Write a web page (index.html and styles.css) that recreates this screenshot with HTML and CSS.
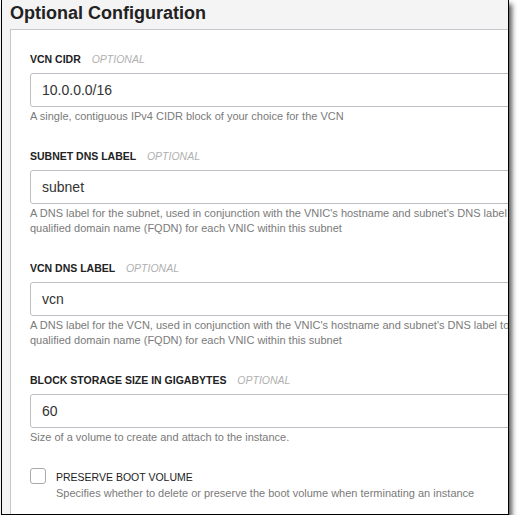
FILE: index.html
```html
<!DOCTYPE html>
<html>
<head>
<meta charset="utf-8">
<link rel="stylesheet" href="styles.css">
</head>
<body>
<div class="frame">
  <h2 class="title">Optional Configuration</h2>
  <div class="panel">
    <div class="field">
      <div class="label">VCN CIDR <span class="opt">OPTIONAL</span></div>
      <div class="input">10.0.0.0/16</div>
      <div class="help">A single, contiguous IPv4 CIDR block of your choice for the VCN</div>
    </div>
    <div class="field">
      <div class="label">SUBNET DNS LABEL <span class="opt">OPTIONAL</span></div>
      <div class="input">subnet</div>
      <div class="help">A DNS label for the subnet, used in conjunction with the VNIC's hostname and subnet's DNS label<br>qualified domain name (FQDN) for each VNIC within this subnet</div>
    </div>
    <div class="field">
      <div class="label">VCN DNS LABEL <span class="opt">OPTIONAL</span></div>
      <div class="input">vcn</div>
      <div class="help">A DNS label for the VCN, used in conjunction with the VNIC's hostname and subnet's DNS label to<br>qualified domain name (FQDN) for each VNIC within this subnet</div>
    </div>
    <div class="field">
      <div class="label">BLOCK STORAGE SIZE IN GIGABYTES <span class="opt">OPTIONAL</span></div>
      <div class="input">60</div>
      <div class="help">Size of a volume to create and attach to the instance.</div>
    </div>
    <div class="check-row">
      <span class="box"></span>
      <div class="check-text">
        <div class="check-label">PRESERVE BOOT VOLUME</div>
        <div class="help">Specifies whether to delete or preserve the boot volume when terminating an instance</div>
      </div>
    </div>
  </div>
</div>
</body>
</html>
```
FILE: styles.css
```css
html, body {
  margin: 0;
  padding: 0;
  background: #ffffff;
}
body {
  font-family: "Liberation Sans", Arial, sans-serif;
}
.frame {
  width: 506px;
  height: 514px;
  margin-left: 1px;
  border: 1px solid #000;
  border-top: none;
  background: #f4f4f4;
  overflow: hidden;
  box-shadow: 3px 4px 5px rgba(0, 0, 0, 0.65);
}
.title {
  margin: 0;
  padding: 2px 0 5px 8px;
  font-size: 18px;
  line-height: 22px;
  font-weight: bold;
  color: #222;
  white-space: nowrap;
}
.panel {
  margin-left: 8px;
  width: 640px;
  height: 600px;
  background: #fff;
  border: 1px solid #c6c6cc;
  padding: 22px 19px 0 19px;
  box-sizing: border-box;
}
.field {
  margin-bottom: 25px;
}
.label {
  font-size: 10.5px;
  line-height: 14px;
  font-weight: bold;
  color: #222;
  white-space: nowrap;
}
.opt {
  font-weight: normal;
  font-style: italic;
  color: #b0b0b0;
  margin-left: 8px;
}
.input {
  margin-top: 7px;
  width: 520px;
  height: 34px;
  box-sizing: border-box;
  border: 1px solid #bdbdc4;
  border-radius: 3px;
  padding-left: 11px;
  font-size: 14px;
  line-height: 32px;
  color: #333;
  white-space: nowrap;
}
.help {
  margin-top: 2px;
  font-size: 11px;
  line-height: 15px;
  color: #7a7a7a;
  white-space: nowrap;
}
.check-row {
  display: flex;
  gap: 10px;
  margin-top: -2px;
}
.box {
  flex: none;
  width: 16px;
  height: 16px;
  box-sizing: border-box;
  border: 1px solid #a9a9b0;
  border-radius: 3px;
  background: #fff;
}
.check-label {
  font-size: 10.5px;
  line-height: 14px;
  color: #222;
  margin-top: 2px;
}
.check-text .help {
  margin-top: 2px;
}
```
